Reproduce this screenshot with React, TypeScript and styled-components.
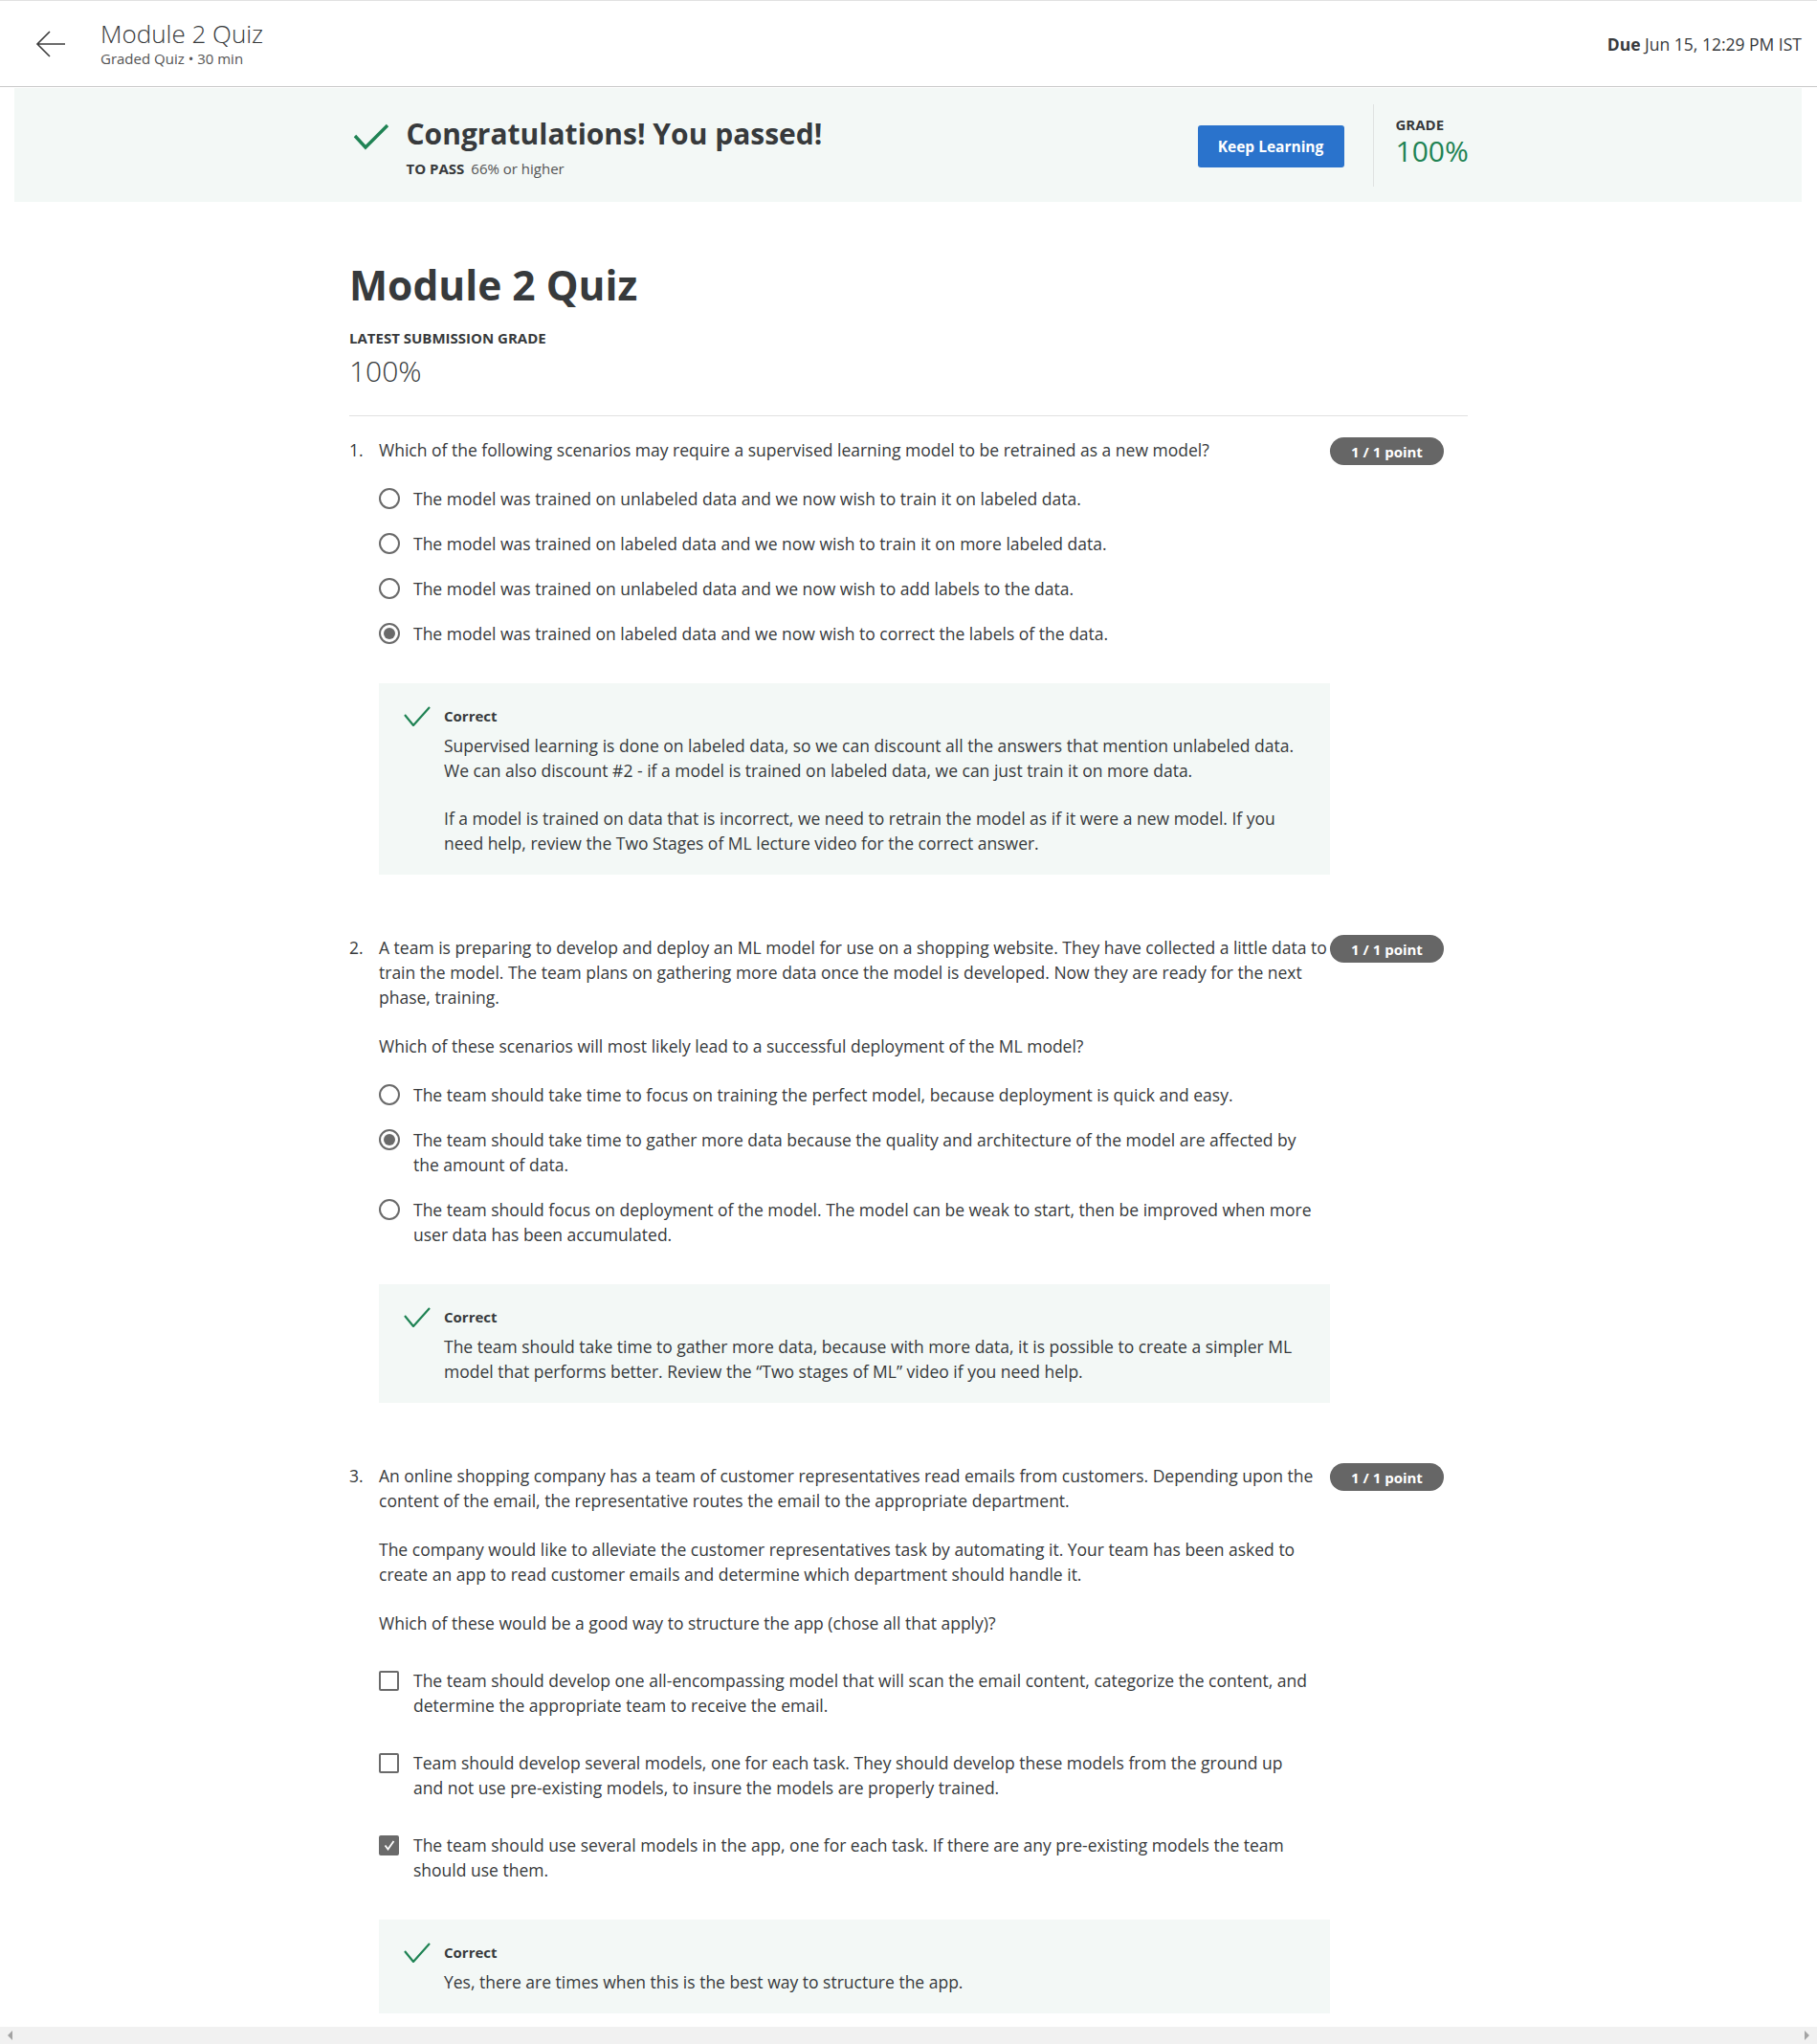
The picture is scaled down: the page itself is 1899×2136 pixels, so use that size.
import React from "react";
import styled, { createGlobalStyle } from "styled-components";

const GlobalStyle = createGlobalStyle`
  html, body { margin: 0; padding: 0; background: #ffffff; }
  body {
    font-family: "Open Sans", "Noto Sans", Arial, sans-serif;
    color: #373a3c;
    overflow: hidden;
  }
  * { box-sizing: border-box; }
  p { margin: 0; }
`;

const Page = styled.div`
  width: 100%;
  min-height: 100%;
`;

const TopBar = styled.header`
  height: 91px;
  border-top: 1px solid #e1e1e1;
  border-bottom: 1px solid #c8c8c8;
  display: flex;
  align-items: center;
  padding: 0 16px 0 37px;
`;

const BackButton = styled.button`
  border: 0;
  background: transparent;
  padding: 0;
  width: 32px;
  height: 28px;
  display: flex;
  cursor: pointer;
`;

const TitleBlock = styled.div`
  margin-left: 36px;
  margin-bottom: 2px;
  display: flex;
  flex-direction: column;
`;

const HeaderTitle = styled.div`
  font-size: 26px;
  font-weight: 300;
  line-height: 32px;
  color: #373a3c;
`;

const HeaderSub = styled.div`
  font-size: 15px;
  line-height: 20px;
  color: #545454;
`;

const Due = styled.div`
  margin-left: auto;
  font-size: 17.5px;
  color: #373a3c;
  b { font-weight: 700; }
`;

const Banner = styled.section`
  margin: 1px 16px 0 15px;
  height: 119px;
  background: #f3f8f6;
  display: flex;
  justify-content: center;
`;

const BannerInner = styled.div`
  width: 1169px;
  display: flex;
  align-items: center;
`;

const PassGroup = styled.div`
  margin-top: 5px;
  display: grid;
  grid-template-columns: 60px auto;
  align-items: center;
`;

const PassIcon = styled.div`
  padding: 5px 0 0 4px;
  display: flex;
  align-items: center;
`;

const PassTitle = styled.div`
  font-size: 30px;
  font-weight: 700;
  line-height: 36px;
  color: #373a3c;
`;

const PassSub = styled.div`
  grid-column: 2;
  margin-top: 8px;
  font-size: 15px;
  line-height: 20px;
  color: #545454;
  b { font-weight: 700; color: #373a3c; margin-right: 7px; }
`;

const BannerRight = styled.div`
  margin-left: auto;
  display: flex;
  align-items: center;
`;

const KeepButton = styled.button`
  height: 44px;
  width: 153px;
  margin-top: 2px;
  border: 0;
  border-radius: 3px;
  background: #2a73cc;
  color: #ffffff;
  font-family: inherit;
  font-size: 15.5px;
  font-weight: 700;
  cursor: pointer;
`;

const VDivider = styled.div`
  width: 1px;
  height: 86px;
  background: #dfe2e1;
  margin: 0 23px 0 30px;
`;

const GradeBlock = styled.div`
  width: 75px;
  margin-bottom: 8px;
  display: flex;
  flex-direction: column;
`;

const SmallCaps = styled.div`
  font-size: 15px;
  font-weight: 700;
  line-height: 20px;
  color: #373a3c;
  text-transform: uppercase;
`;

const GradeValue = styled.div`
  font-size: 30px;
  font-weight: 400;
  line-height: 36px;
  color: #1f8354;
  white-space: nowrap;
`;

const Main = styled.main`
  width: 1169px;
  margin: 0 auto;
  padding: 61px 0 12px;
`;

const H1 = styled.h1`
  margin: 0;
  font-size: 42.5px;
  font-weight: 700;
  line-height: 52px;
  color: #373a3c;
`;

const SubmissionLabel = styled(SmallCaps)`
  margin-top: 19px;
`;

const Score = styled.div`
  margin-top: 7px;
  font-size: 30px;
  font-weight: 300;
  line-height: 36px;
  color: #373a3c;
`;

const Rule = styled.hr`
  margin: 28px 0 0;
  border: 0;
  border-top: 1px solid #e0e0e0;
`;

const QuestionList = styled.ol`
  list-style: none;
  margin: 22px 0 0;
  padding: 0;
`;

const Question = styled.li`
  display: flex;
  align-items: flex-start;
  & + & { margin-top: 63px; }
`;

const Num = styled.div`
  width: 31px;
  flex: none;
  font-size: 17.5px;
  line-height: 26px;
`;

const Body = styled.div`
  width: 994px;
  flex: none;
`;

const Prompt = styled.p`
  margin-right: -6px;
  font-size: 17.5px;
  line-height: 26px;
  & + & { margin-top: 25px; }
`;

const Badge = styled.div`
  position: relative;
  flex: none;
  width: 119px;
  height: 29px;
  border-radius: 15px;
  background: #666666;
  color: #ffffff;
  font-size: 15px;
  font-weight: 700;
  display: flex;
  align-items: center;
  justify-content: center;
`;

const OptionList = styled.div<{ $top: number; $gap: number }>`
  margin-top: ${(p) => p.$top}px;
  display: flex;
  flex-direction: column;
  gap: ${(p) => p.$gap}px;
`;

const Option = styled.label`
  display: flex;
  align-items: flex-start;
  padding-right: 15px;
  font-size: 17.5px;
  line-height: 26px;
`;

const RadioMark = styled.span<{ $on: boolean }>`
  flex: none;
  width: 22px;
  height: 22px;
  margin: 2px 14px 0 0;
  border-radius: 50%;
  border: 2px solid #6a6a6a;
  display: flex;
  align-items: center;
  justify-content: center;
  &::after {
    content: "";
    width: 12px;
    height: 12px;
    border-radius: 50%;
    background: ${(p) => (p.$on ? "#6a6a6a" : "transparent")};
  }
`;

const CheckMark = styled.span<{ $on: boolean }>`
  flex: none;
  width: 21px;
  height: 21px;
  margin: 3px 15px 0 0;
  border-radius: 2px;
  border: 2px solid #6a6a6a;
  background: ${(p) => (p.$on ? "#6a6a6a" : "transparent")};
  display: flex;
  align-items: center;
  justify-content: center;
`;

const Feedback = styled.div`
  margin-top: 39px;
  background: #f3f8f6;
  padding: 24px 26px 20px 26px;
  display: grid;
  grid-template-columns: 42px 1fr;
`;

const FeedbackIcon = styled.div`
  display: flex;
  align-items: center;
`;

const FeedbackTitle = styled.div`
  font-size: 15px;
  font-weight: 700;
  line-height: 20px;
  color: #373a3c;
`;

const FeedbackText = styled.div`
  grid-column: 2;
  margin-top: 7px;
  font-size: 17.5px;
  line-height: 26px;
  p + p { margin-top: 24px; }
`;

const ScrollBar = styled.div`
  position: fixed;
  left: 0;
  right: 0;
  bottom: 0;
  height: 18px;
  background: #f1f1f1;
  display: flex;
  align-items: center;
  justify-content: space-between;
  padding: 0 8px;
`;

const ScrollArrow = styled.span<{ $dir: "left" | "right" }>`
  width: 0;
  height: 0;
  border-top: 5px solid transparent;
  border-bottom: 5px solid transparent;
  ${(p) =>
    p.$dir === "left"
      ? "border-right: 5px solid #a3a3a3;"
      : "border-left: 5px solid #a3a3a3;"}
`;

const BackArrow = () => (
  <svg width="32" height="28" viewBox="0 0 32 28" fill="none">
    <path d="M31 14H2M15 1L2 14l13 13" stroke="#3c3c3c" strokeWidth="1.6" />
  </svg>
);

const BigCheck = () => (
  <svg width="38" height="28" viewBox="0 0 38 28" fill="none">
    <path d="M2 13l11 12L36 2" stroke="#1f8354" strokeWidth="3.4" />
  </svg>
);

const SmallCheck = () => (
  <svg width="28" height="21" viewBox="0 0 28 21" fill="none">
    <path d="M1 9l9 11L27 1" stroke="#1f8354" strokeWidth="2.2" />
  </svg>
);

const BoxTick = () => (
  <svg width="12" height="11" viewBox="0 0 12 11" fill="none">
    <path d="M1.5 5.5l3 4 6-8.5" stroke="#ffffff" strokeWidth="1.8" />
  </svg>
);

type Q = {
  prompt: string[];
  kind: "radio" | "check";
  options: string[];
  selected: number;
  feedback: string[];
};

const questions: Q[] = [
  {
    prompt: [
      "Which of the following scenarios may require a supervised learning model to be retrained as a new model?",
    ],
    kind: "radio",
    options: [
      "The model was trained on unlabeled data and we now wish to train it on labeled data.",
      "The model was trained on labeled data and we now wish to train it on more labeled data.",
      "The model was trained on unlabeled data and we now wish to add labels to the data.",
      "The model was trained on labeled data and we now wish to correct the labels of the data.",
    ],
    selected: 3,
    feedback: [
      "Supervised learning is done on labeled data, so we can discount all the answers that mention unlabeled data. We can also discount #2 - if a model is trained on labeled data, we can just train it on more data.",
      "If a model is trained on data that is incorrect, we need to retrain the model as if it were a new model. If you need help, review the Two Stages of ML lecture video for the correct answer.",
    ],
  },
  {
    prompt: [
      "A team is preparing to develop and deploy an ML model for use on a shopping website. They have collected a little data to train the model. The team plans on gathering more data once the model is developed. Now they are ready for the next phase, training.",
      "Which of these scenarios will most likely lead to a successful deployment of the ML model?",
    ],
    kind: "radio",
    options: [
      "The team should take time to focus on training the perfect model, because deployment is quick and easy.",
      "The team should take time to gather more data because the quality and architecture of the model are affected by the amount of data.",
      "The team should focus on deployment of the model. The model can be weak to start, then be improved when more user data has been accumulated.",
    ],
    selected: 1,
    feedback: [
      "The team should take time to gather more data, because with more data, it is possible to create a simpler ML model that performs better. Review the \u201cTwo stages of ML\u201d video if you need help.",
    ],
  },
  {
    prompt: [
      "An online shopping company has a team of customer representatives read emails from customers. Depending upon the content of the email, the representative routes the email to the appropriate department.",
      "The company would like to alleviate the customer representatives task by automating it. Your team has been asked to create an app to read customer emails and determine which department should handle it.",
      "Which of these would be a good way to structure the app (chose all that apply)?",
    ],
    kind: "check",
    options: [
      "The team should develop one all-encompassing model that will scan the email content, categorize the content, and determine the appropriate team to receive the email.",
      "Team should develop several models, one for each task. They should develop these models from the ground up and not use pre-existing models, to insure the models are properly trained.",
      "The team should use several models in the app, one for each task. If there are any pre-existing models the team should use them.",
    ],
    selected: 2,
    feedback: ["Yes, there are times when this is the best way to structure the app."],
  },
];

export default function App() {
  return (
    <Page>
      <GlobalStyle />
      <TopBar>
        <BackButton aria-label="Back">
          <BackArrow />
        </BackButton>
        <TitleBlock>
          <HeaderTitle>Module 2 Quiz</HeaderTitle>
          <HeaderSub>Graded Quiz • 30 min</HeaderSub>
        </TitleBlock>
        <Due>
          <b>Due</b> Jun 15, 12:29 PM IST
        </Due>
      </TopBar>

      <Banner>
        <BannerInner>
          <PassGroup>
            <PassIcon>
              <BigCheck />
            </PassIcon>
            <PassTitle>Congratulations! You passed!</PassTitle>
            <PassSub>
              <b>TO PASS</b>66% or higher
            </PassSub>
          </PassGroup>
          <BannerRight>
            <KeepButton>Keep Learning</KeepButton>
            <VDivider />
            <GradeBlock>
              <SmallCaps>Grade</SmallCaps>
              <GradeValue>100%</GradeValue>
            </GradeBlock>
          </BannerRight>
        </BannerInner>
      </Banner>

      <Main>
        <H1>Module 2 Quiz</H1>
        <SubmissionLabel>Latest Submission Grade</SubmissionLabel>
        <Score>100%</Score>
        <Rule />
        <QuestionList>
          {questions.map((q, qi) => (
            <Question key={qi}>
              <Num>{qi + 1}.</Num>
              <Body>
                {q.prompt.map((p, pi) => (
                  <Prompt key={pi}>{p}</Prompt>
                ))}
                <OptionList $top={q.kind === "radio" ? 25 : 34} $gap={q.kind === "radio" ? 21 : 34}>
                  {q.options.map((o, oi) => (
                    <Option key={oi}>
                      {q.kind === "radio" ? (
                        <RadioMark $on={oi === q.selected} />
                      ) : (
                        <CheckMark $on={oi === q.selected}>{oi === q.selected && <BoxTick />}</CheckMark>
                      )}
                      <span>{o}</span>
                    </Option>
                  ))}
                </OptionList>
                <Feedback>
                  <FeedbackIcon>
                    <SmallCheck />
                  </FeedbackIcon>
                  <FeedbackTitle>Correct</FeedbackTitle>
                  <FeedbackText>
                    {q.feedback.map((f, fi) => (
                      <p key={fi}>{f}</p>
                    ))}
                  </FeedbackText>
                </Feedback>
              </Body>
              <Badge>1 / 1 point</Badge>
            </Question>
          ))}
        </QuestionList>
      </Main>

      <ScrollBar>
        <ScrollArrow $dir="left" />
        <ScrollArrow $dir="right" />
      </ScrollBar>
    </Page>
  );
}
